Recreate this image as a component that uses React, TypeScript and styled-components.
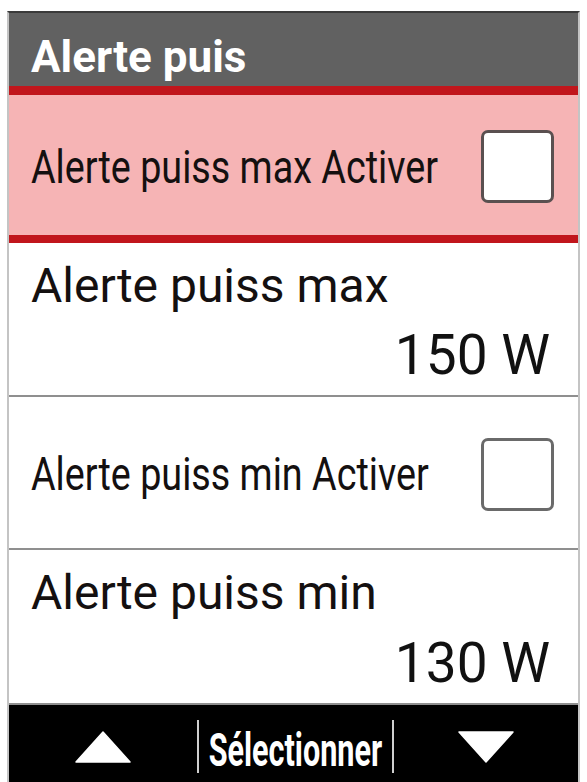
import React from 'react';
import styled, { createGlobalStyle } from 'styled-components';

const GlobalStyle = createGlobalStyle`
  html, body {
    margin: 0;
    padding: 0;
    background: #ffffff;
    overflow: hidden;
  }
  body {
    font-family: Roboto, "Noto Sans", "Liberation Sans", sans-serif;
  }
`;

// --- Device screen frame ---

const Screen = styled.div`
  margin: 11px 0 0 7px;
  width: 573px;
  display: flex;
  flex-direction: column;
  border-top: 2px solid #3a3a3a;
  border-left: 2px solid #c4c4c4;
  border-right: 2px solid #c4c4c4;
  box-sizing: border-box;
`;

const Header = styled.div`
  height: 73px;
  box-sizing: border-box;
  padding: 22px 22px 0;
  background: #616161;
  color: #ffffff;
  font-size: 44px;
  font-weight: 700;
  line-height: 1;
  white-space: nowrap;
`;

const Row = styled.div<{ $height: number; $active?: boolean }>`
  height: ${p => p.$height}px;
  box-sizing: border-box;
  display: flex;
  align-items: center;
  padding: 3px 24px 0 22px;
  background: ${p => (p.$active ? '#f6b4b5' : '#ffffff')};
  border-top: ${p => (p.$active ? '9px solid #c1161c' : 'none')};
  border-bottom: ${p => (p.$active ? '8px solid #c1161c' : '2px solid #8f8f8f')};
`;

const ValueRow = styled.div<{ $height: number }>`
  height: ${p => p.$height}px;
  box-sizing: border-box;
  display: flex;
  flex-direction: column;
  justify-content: space-between;
  padding: 19px 28px 12px 22px;
  background: #ffffff;
  border-bottom: 2px solid #8f8f8f;
`;

// condensed text, the device squeezes long labels to fit
const Label = styled.span<{ $squeeze?: number }>`
  flex: 1;
  min-width: 0;
  display: block;
  white-space: nowrap;
  font-size: ${p => (p.$squeeze ? 46 : 48)}px;
  line-height: 1;
  color: #141010;
  transform: scaleX(${p => p.$squeeze ?? 1});
  transform-origin: left center;
`;

const Value = styled.span`
  align-self: flex-end;
  font-size: 55px;
  line-height: 1;
  color: #111111;
  white-space: nowrap;
`;

const CheckBox = styled.span<{ $dark?: boolean }>`
  flex: none;
  width: 73px;
  height: 73px;
  box-sizing: border-box;
  border: 3px solid ${p => (p.$dark ? '#5a5050' : '#6a6a6a')};
  border-radius: 7px;
  background: #ffffff;
`;

// --- Soft key bar ---

const Footer = styled.div`
  height: 82px;
  background: #000000;
  display: flex;
  align-items: center;
`;

const KeyButton = styled.div<{ $width: number }>`
  flex: none;
  width: ${p => p.$width}px;
  display: flex;
  justify-content: center;
  align-items: center;
  padding-top: 2px;
`;

const KeySeparator = styled.span`
  flex: none;
  width: 2px;
  height: 53px;
  background: #cfcfcf;
`;

const KeyCenter = styled.div`
  flex: 1;
  min-width: 0;
  display: flex;
  justify-content: center;
  overflow: visible;
`;

const KeyText = styled.span`
  flex: none;
  color: #ffffff;
  font-size: 47px;
  font-weight: 700;
  line-height: 1;
  padding-top: 6px;
  white-space: nowrap;
  transform: scaleX(0.65);
  transform-origin: center;
`;

const Arrow: React.FC<{ down?: boolean }> = ({ down }) => (
  <svg width="56" height="32" viewBox="0 0 56 32">
    {down ? (
      <polygon points="1,1 55,1 28,31" fill="#ffffff" strokeLinejoin="round" stroke="#ffffff" strokeWidth="1.5" />
    ) : (
      <polygon points="28,1 55,31 1,31" fill="#ffffff" strokeLinejoin="round" stroke="#ffffff" strokeWidth="1.5" />
    )}
  </svg>
);

const App: React.FC = () => {
  return (
    <>
      <GlobalStyle />
      <Screen>
        <Header>Alerte puis</Header>

        <Row $height={157} $active>
          <Label $squeeze={0.82}>Alerte puiss max Activer</Label>
          <CheckBox $dark />
        </Row>

        <ValueRow $height={154}>
          <Label>Alerte puiss max</Label>
          <Value>150 W</Value>
        </ValueRow>

        <Row $height={153}>
          <Label $squeeze={0.82}>Alerte puiss min Activer</Label>
          <CheckBox />
        </Row>

        <ValueRow $height={155}>
          <Label>Alerte puiss min</Label>
          <Value>130 W</Value>
        </ValueRow>

        <Footer>
          <KeyButton $width={188}>
            <Arrow />
          </KeyButton>
          <KeySeparator />
          <KeyCenter>
            <KeyText>Sélectionner</KeyText>
          </KeyCenter>
          <KeySeparator />
          <KeyButton $width={184}>
            <Arrow down />
          </KeyButton>
        </Footer>
      </Screen>
    </>
  );
};

export default App;
